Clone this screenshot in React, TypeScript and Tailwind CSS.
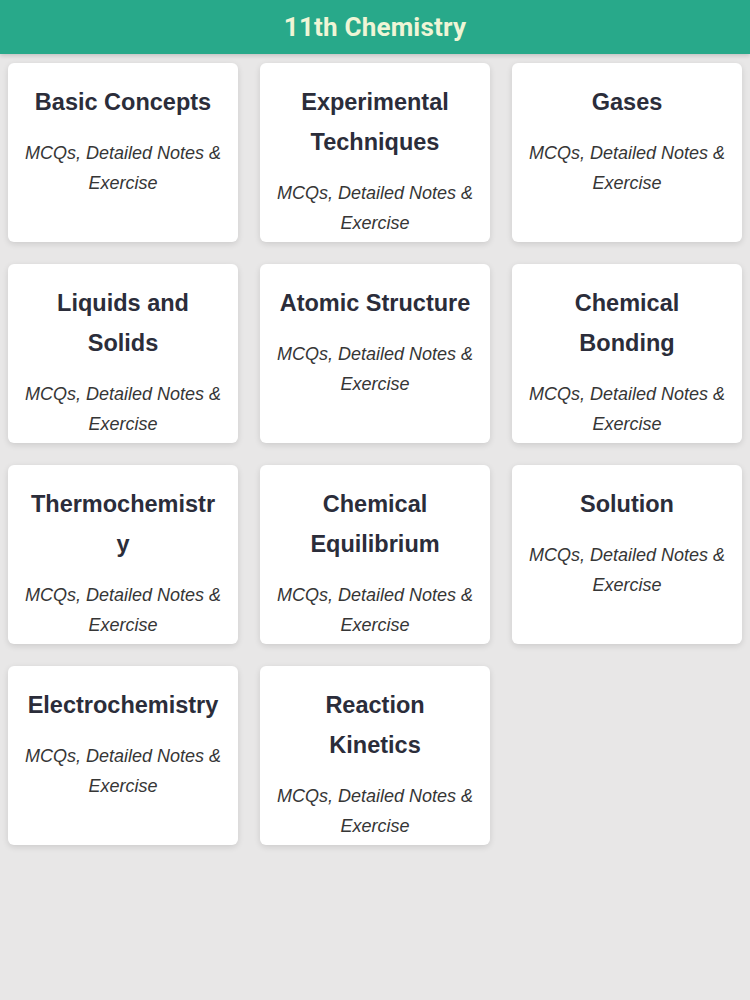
const topics = [
  'Basic Concepts',
  'Experimental Techniques',
  'Gases',
  'Liquids and Solids',
  'Atomic Structure',
  'Chemical Bonding',
  'Thermochemistry',
  'Chemical Equilibrium',
  'Solution',
  'Electrochemistry',
  'Reaction Kinetics',
];

export default function App() {
  return (
    <div className="min-h-[1000px] bg-[#e8e7e7]">
      {/* Header */}
      <header className="h-[54px] bg-[#28a98a] flex items-center justify-center shadow-[0_2px_4px_rgba(0,0,0,0.15)]">
        <h1 className="text-[26px] font-bold text-[#eff5d6] font-['Roboto',sans-serif] tracking-[0.2px]">
          11th Chemistry
        </h1>
      </header>

      {/* Chapters */}
      <div className="grid grid-cols-3 gap-x-[22px] gap-y-[22px] px-[8px] pt-[9px]">
        {topics.map((t) => (
          <div
            key={t}
            className="h-[179px] bg-white rounded-[6px] shadow-[0_2px_6px_rgba(0,0,0,0.12)] px-[15px] pt-[19px] text-center font-['Liberation_Sans',Arial,sans-serif] text-[#2b2d3a]"
          >
            <h2 className="px-[3px] text-[23.5px] font-bold leading-[40px] break-words">{t}</h2>
            <p className="mt-[16px] text-[18px] italic leading-[30px] text-[#363636]">
              MCQs, Detailed Notes & Exercise
            </p>
          </div>
        ))}
      </div>
    </div>
  );
}
